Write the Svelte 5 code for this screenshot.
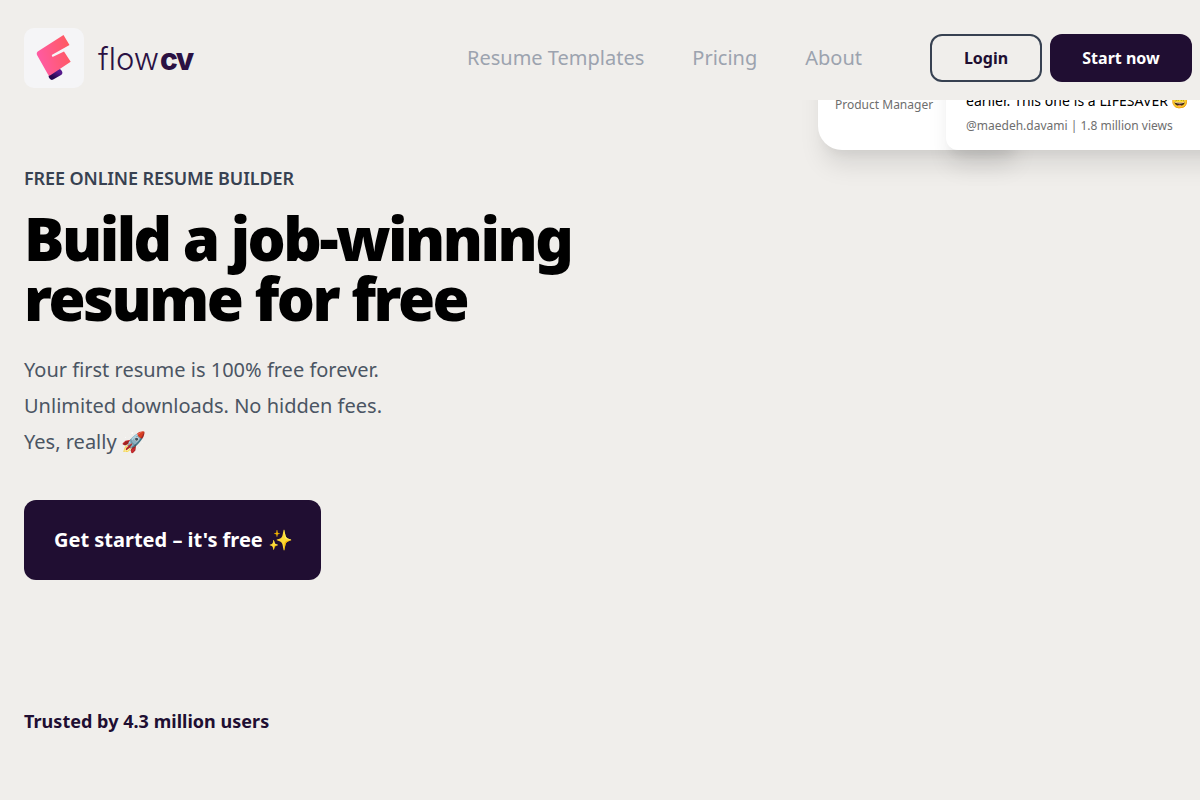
<script>
	const links = ['Resume Templates', 'Pricing', 'About'];
</script>

<div class="page">
	<header class="topbar">
		<a class="brand" href="#top">
			<span class="tile">
				<svg width="60" height="60" viewBox="0 0 60 60" aria-hidden="true">
					<defs>
						<linearGradient id="flame" x1="0" y1="0.6" x2="1" y2="0.3">
							<stop offset="0" stop-color="#ff5aa6" />
							<stop offset="1" stop-color="#ff5a5f" />
						</linearGradient>
						<linearGradient id="roll" x1="0" y1="1" x2="1" y2="0">
							<stop offset="0" stop-color="#26084f" />
							<stop offset="1" stop-color="#561a8c" />
						</linearGradient>
					</defs>
					<path d="M28 48.5 L35 44.5" stroke="url(#roll)" stroke-width="6.5" stroke-linecap="round" fill="none" />
					<path
						d="M14.5 23 L39.5 7 L45.5 17 L27.7 27 L28.5 29 L40 23.5 L46.7 33.7 L26 47.5 Q25 48 24 46.5 L13 27 Q12 24.5 14.5 23 Z"
						fill="url(#flame)"
					/>
				</svg>
			</span>
			<span class="wordmark">flow<b>cv</b></span>
		</a>
		<nav class="links">
			{#each links as link}
				<a href="#top">{link}</a>
			{/each}
		</nav>
		<div class="actions">
			<button class="btn login">Login</button>
			<button class="btn start">Start now</button>
		</div>
	</header>

	<main class="hero">
		<div class="card person">
			<span>Product Manager</span>
		</div>
		<div class="card quote">
			<p>earlier. This one is a LIFESAVER 😅</p>
			<span>@maedeh.davami | 1.8 million views</span>
		</div>

		<p class="eyebrow">FREE ONLINE RESUME BUILDER</p>
		<h1>Build a job-winning<br />resume for free</h1>
		<div class="lede">
			<p>Your first resume is 100% free forever.</p>
			<p>Unlimited downloads. No hidden fees.</p>
			<p>Yes, really 🚀</p>
		</div>
		<button class="cta">Get started – it's free ✨</button>
		<p class="trusted">Trusted by 4.3 million users</p>
	</main>
</div>

<style>
	:global(body) {
		margin: 0;
		background: #f0eeeb;
	}

	.page {
		height: 800px;
		overflow: hidden;
		font-family: 'Noto Sans', 'Noto Color Emoji', sans-serif;
	}

	.topbar {
		position: relative;
		z-index: 2;
		display: flex;
		align-items: center;
		height: 100px;
		box-sizing: border-box;
		padding: 16px 8px 0 24px;
		background: #f0eeeb;
	}

	.brand {
		display: flex;
		align-items: center;
		gap: 14px;
		text-decoration: none;
	}

	.tile {
		display: block;
		width: 60px;
		height: 60px;
		border-radius: 10px;
		background: #f5f5f7;
	}

	.tile svg {
		display: block;
	}

	.wordmark {
		margin-top: 1px;
		font-family: 'Inter', 'Noto Sans', sans-serif;
		font-size: 31px;
		font-weight: 300;
		color: #2b1143;
	}

	.wordmark b {
		margin-left: 1px;
		font-weight: 800;
		font-size: 30px;
		letter-spacing: -1.5px;
	}

	.links {
		display: flex;
		gap: 48px;
		margin-left: auto;
		margin-right: 68px;
	}

	.links a {
		font-size: 20px;
		line-height: 28px;
		color: #9ca3af;
		text-decoration: none;
	}

	.actions {
		display: flex;
		gap: 8px;
	}

	.btn {
		height: 48px;
		box-sizing: border-box;
		border-radius: 12px;
		font-family: inherit;
		font-size: 16px;
		font-weight: 700;
	}

	.login {
		width: 112px;
		background: transparent;
		border: 2px solid #374151;
		color: #200e32;
	}

	.start {
		width: 142px;
		background: #200e32;
		border: 0;
		color: #fff;
	}

	.hero {
		position: relative;
		padding: 66px 24px 0;
	}

	.card {
		position: absolute;
		background: #fff;
		box-sizing: border-box;
		box-shadow: 0 20px 25px -5px rgba(0, 0, 0, 0.1), 0 10px 10px -5px rgba(0, 0, 0, 0.04);
	}

	.person {
		left: 818px;
		top: -60px;
		width: 200px;
		height: 110px;
		padding: 55px 17px 0;
		border-radius: 0 0 0 24px;
		font-size: 12px;
		line-height: 20px;
		color: #6e6e6e;
	}

	.quote {
		left: 946px;
		top: -60px;
		width: 300px;
		height: 110px;
		padding: 51px 20px 0;
		border-radius: 0 0 0 12px;
	}

	.quote p {
		margin: 0 0 5px;
		font-size: 14px;
		line-height: 20px;
		letter-spacing: 0.06px;
		color: #000;
		white-space: nowrap;
	}

	.quote span {
		font-size: 12px;
		line-height: 20px;
		color: #6e6e6e;
		display: block;
	}

	.eyebrow {
		margin: 0;
		font-size: 18px;
		line-height: 24px;
		font-weight: 600;
		letter-spacing: -0.12px;
		color: #374151;
	}

	h1 {
		margin: 18px 0 0;
		font-size: 60px;
		line-height: 60px;
		font-weight: 900;
		letter-spacing: -2.5px;
		color: #000;
	}

	.lede {
		margin-top: 24px;
		font-size: 20px;
		line-height: 36px;
		color: #4b5563;
	}

	.lede p {
		margin: 0;
	}

	.cta {
		display: block;
		width: 297px;
		height: 80px;
		margin-top: 40px;
		padding: 0 0 2px 30px;
		border: 0;
		border-radius: 12px;
		background: #200e32;
		color: #fff;
		font-family: inherit;
		font-size: 20px;
		font-weight: 700;
		text-align: left;
	}

	.trusted {
		margin: 129px 0 0;
		font-size: 18px;
		line-height: 24px;
		font-weight: 700;
		letter-spacing: 0.03px;
		color: #200e32;
	}
</style>
